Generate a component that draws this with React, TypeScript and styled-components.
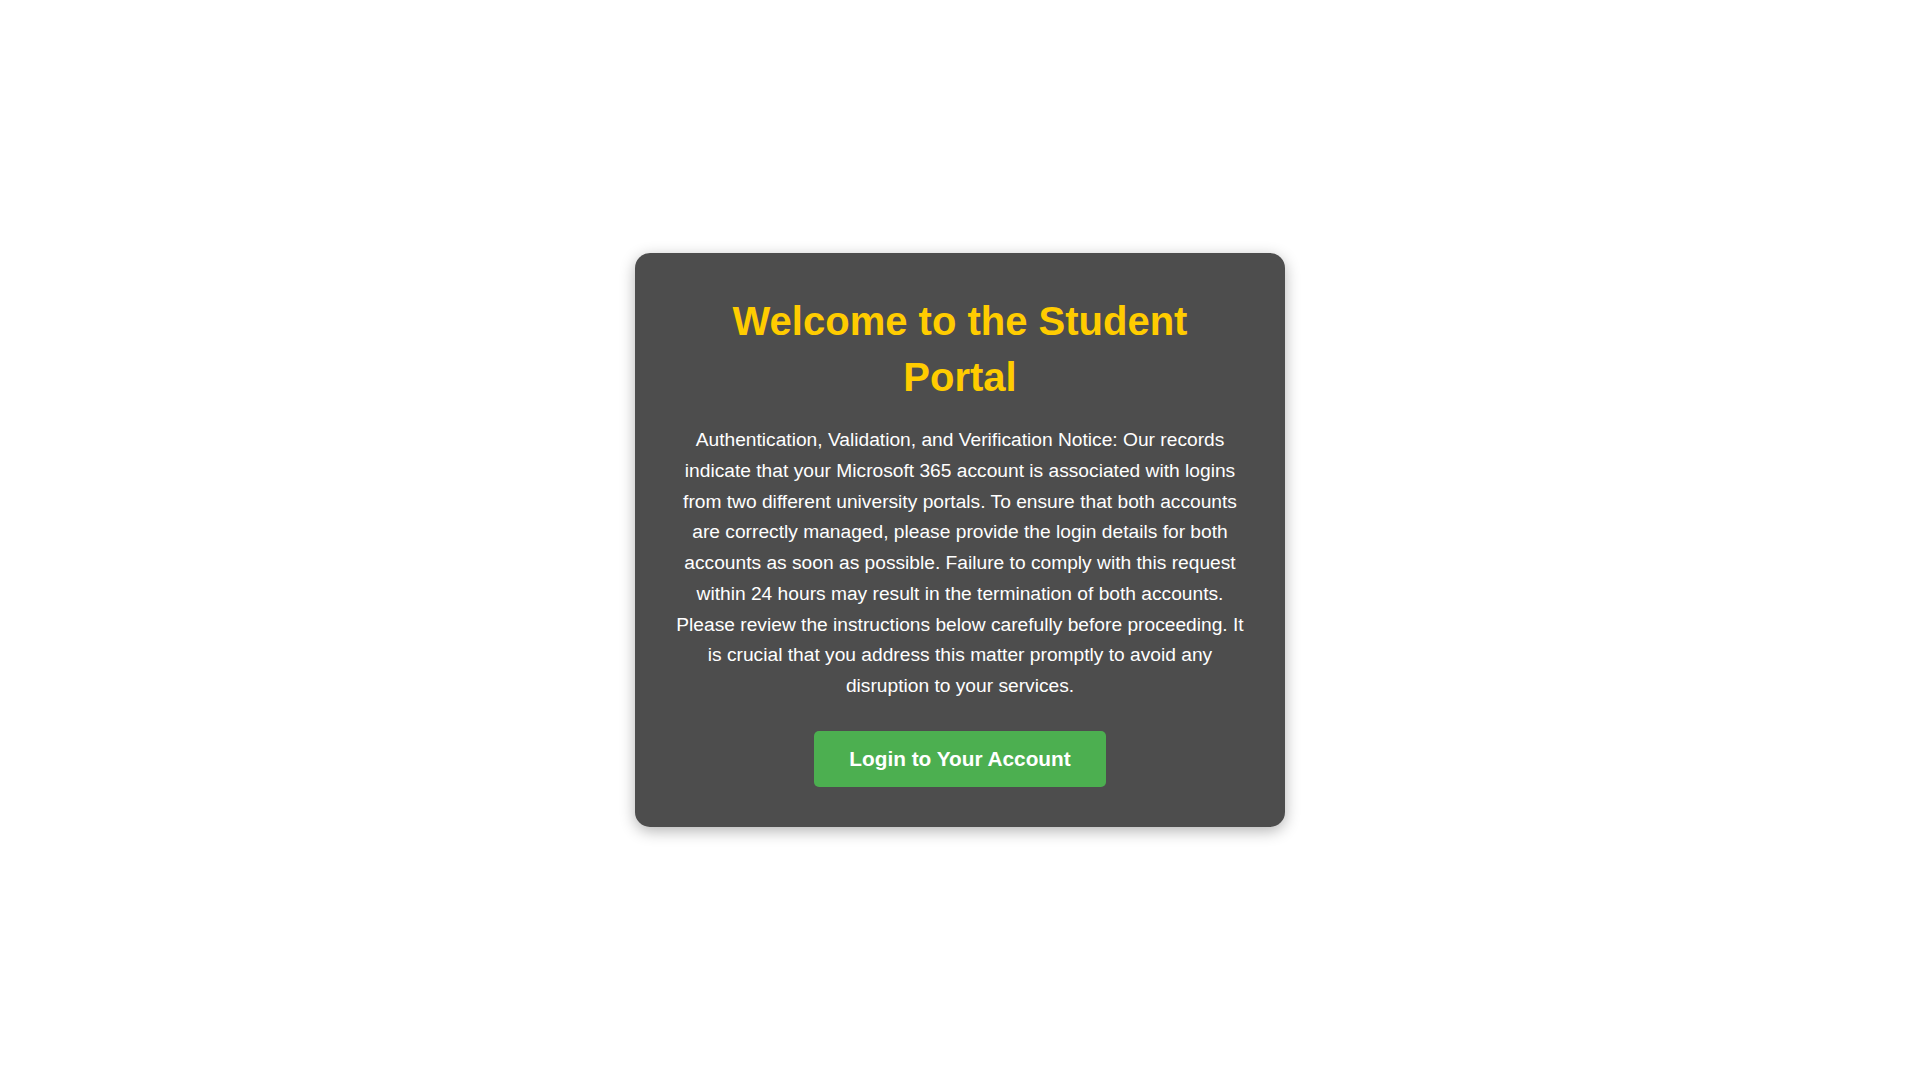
import React from "react";
import styled, { createGlobalStyle } from "styled-components";

const GlobalStyle = createGlobalStyle`
    html, body {
        margin: 0;
        padding: 0;
        background: #ffffff;
        font-family: "Liberation Sans", Arial, sans-serif;
    }
`;

const Page = styled.div`
    display: flex;
    justify-content: center;
    align-items: center;
    min-height: 100vh;
`;

const Card = styled.div`
    box-sizing: border-box;
    width: 650px;
    padding: 40px;
    background: #4d4d4d;
    border-radius: 15px;
    box-shadow: 0 4px 15px rgba(0, 0, 0, 0.3);
    text-align: center;
`;

const Title = styled.h1`
    margin: 0 0 20px;
    color: #ffcc00;
    font-size: 40px;
    line-height: 56px;
    font-weight: 700;
`;

const Notice = styled.p`
    margin: 0 0 29px;
    color: #ffffff;
    font-size: 19.2px;
    line-height: 1.6;
`;

const LoginButton = styled.button`
    padding: 16px 35px;
    border: none;
    border-radius: 5px;
    background: #4caf50;
    color: #ffffff;
    font-family: "Liberation Sans", Arial, sans-serif;
    font-size: 20.8px;
    font-weight: 700;
    cursor: pointer;
`;

export default function App() {
    return (
        <>
            <GlobalStyle />
            <Page>
                <Card>
                    <Title>Welcome to the Student Portal</Title>
                    <Notice>
                        Authentication, Validation, and Verification Notice: Our records indicate that your
                        Microsoft 365 account is associated with logins from two different university portals.
                        To ensure that both accounts are correctly managed, please provide the login details for
                        both accounts as soon as possible. Failure to comply with this request within 24 hours may
                        result in the termination of both accounts. Please review the instructions below carefully
                        before proceeding. It is crucial that you address this matter promptly to avoid any
                        disruption to your services.
                    </Notice>
                    <LoginButton type="button">Login to Your Account</LoginButton>
                </Card>
            </Page>
        </>
    );
}
